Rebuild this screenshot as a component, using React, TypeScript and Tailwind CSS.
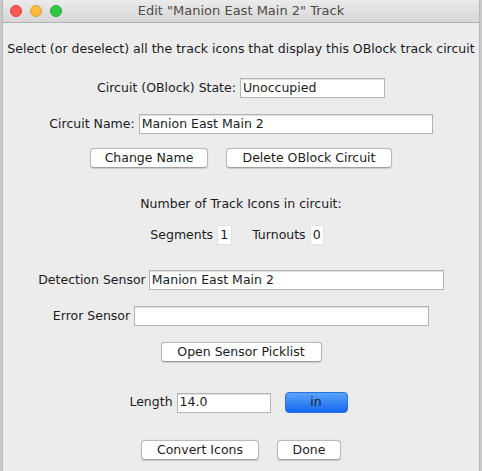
import React from 'react'

const font = { fontFamily: '"DejaVu Sans", "Liberation Sans", sans-serif' }

function Field({ value, className }: { value: string; className: string }) {
  return (
    <div
      className={`h-[20px] bg-white border border-[#b4b4b4] shadow-[inset_0_1px_0_#e2e2e2] flex items-center pl-[2px] text-[12.5px] text-[#1b1b1b] ${className}`}
    >
      {value}
    </div>
  )
}

function Button({ label, className }: { label: string; className: string }) {
  return (
    <div
      className={`h-[20px] bg-white border border-[#b8b8b8] border-b-[#a0a0a0] rounded-[4px] shadow-[0_0.5px_1px_rgba(0,0,0,0.15)] flex items-center justify-center text-[12.5px] text-[#1b1b1b] ${className}`}
    >
      {label}
    </div>
  )
}

export default function App() {
  return (
    <div className="w-[482px] h-[471px] bg-[#c9c9c9] flex" style={font}>
      <div className="ml-[2px] w-[478px] h-[471px] bg-[#ececec] border-x border-[#b9b9b9] flex flex-col">
        {/* Title bar */}
        <div className="h-[23px] shrink-0 bg-gradient-to-b from-[#ebebeb] to-[#d6d6d6] border-b border-[#b1b1b1] relative flex items-center justify-center rounded-t-[4px]">
          <div className="absolute left-[7px] top-[5px] flex gap-[8px]">
            <span className="w-[12px] h-[12px] rounded-full bg-[#fc5753] border border-[#df3d38]" />
            <span className="w-[12px] h-[12px] rounded-full bg-[#fdbc40] border border-[#dea123]" />
            <span className="w-[12px] h-[12px] rounded-full bg-[#33c748] border border-[#27aa35]" />
          </div>
          <span className="text-[13px] text-[#4c4c4c]">Edit "Manion East Main 2" Track</span>
        </div>

        {/* Body */}
        <div className="flex flex-col items-center text-[12.5px] text-[#1b1b1b]">
          <div className="mt-[17px] h-[18px] flex items-center">
            Select (or deselect) all the track icons that display this OBlock track circuit
          </div>

          <div className="mt-[20px] flex items-center gap-[4px]">
            <span>Circuit (OBlock) State:</span>
            <Field value="Unoccupied" className="w-[145px]" />
          </div>

          <div className="mt-[16px] flex items-center gap-[4px]">
            <span>Circuit Name:</span>
            <Field value="Manion East Main 2" className="w-[294px]" />
          </div>

          <div className="mt-[14px] flex items-center gap-[18px]">
            <Button label="Change Name" className="w-[118px]" />
            <Button label="Delete OBlock Circuit" className="w-[166px]" />
          </div>

          <div className="mt-[27px] h-[18px] flex items-center">Number of Track Icons in circuit:</div>

          <div className="mt-[12px] mr-[8px] flex items-center">
            <span>Segments</span>
            <Field value="1" className="ml-[4px] w-[15px] h-[18px] border-[#e2e2e2] shadow-none" />
            <span className="ml-[20px]">Turnouts</span>
            <Field value="0" className="ml-[4px] w-[14px] h-[18px] border-[#e2e2e2] shadow-none" />
          </div>

          <div className="mt-[25px] flex items-center gap-[3px]">
            <span>Detection Sensor</span>
            <Field value="Manion East Main 2" className="w-[295px]" />
          </div>

          <div className="mt-[16px] flex items-center gap-[4px]">
            <span>Error Sensor</span>
            <Field value="" className="w-[295px]" />
          </div>

          <div className="mt-[16px]">
            <Button label="Open Sensor Picklist" className="w-[161px]" />
          </div>

          <div className="mt-[30px] mr-[5px] flex items-center">
            <span>Length</span>
            <Field value="14.0" className="ml-[4px] w-[94px]" />
            <div className="ml-[14px] w-[63px] h-[21px] rounded-[4px] bg-gradient-to-b from-[#5aa4fa] to-[#0f66ee] border border-[#2a6fe0] flex items-center justify-center text-[12.5px] text-[#1b1b1b]">
              in
            </div>
          </div>

          <div className="mt-[27px] flex items-center gap-[18px]">
            <Button label="Convert Icons" className="w-[118px]" />
            <Button label="Done" className="w-[64px]" />
          </div>
        </div>
      </div>
    </div>
  )
}
